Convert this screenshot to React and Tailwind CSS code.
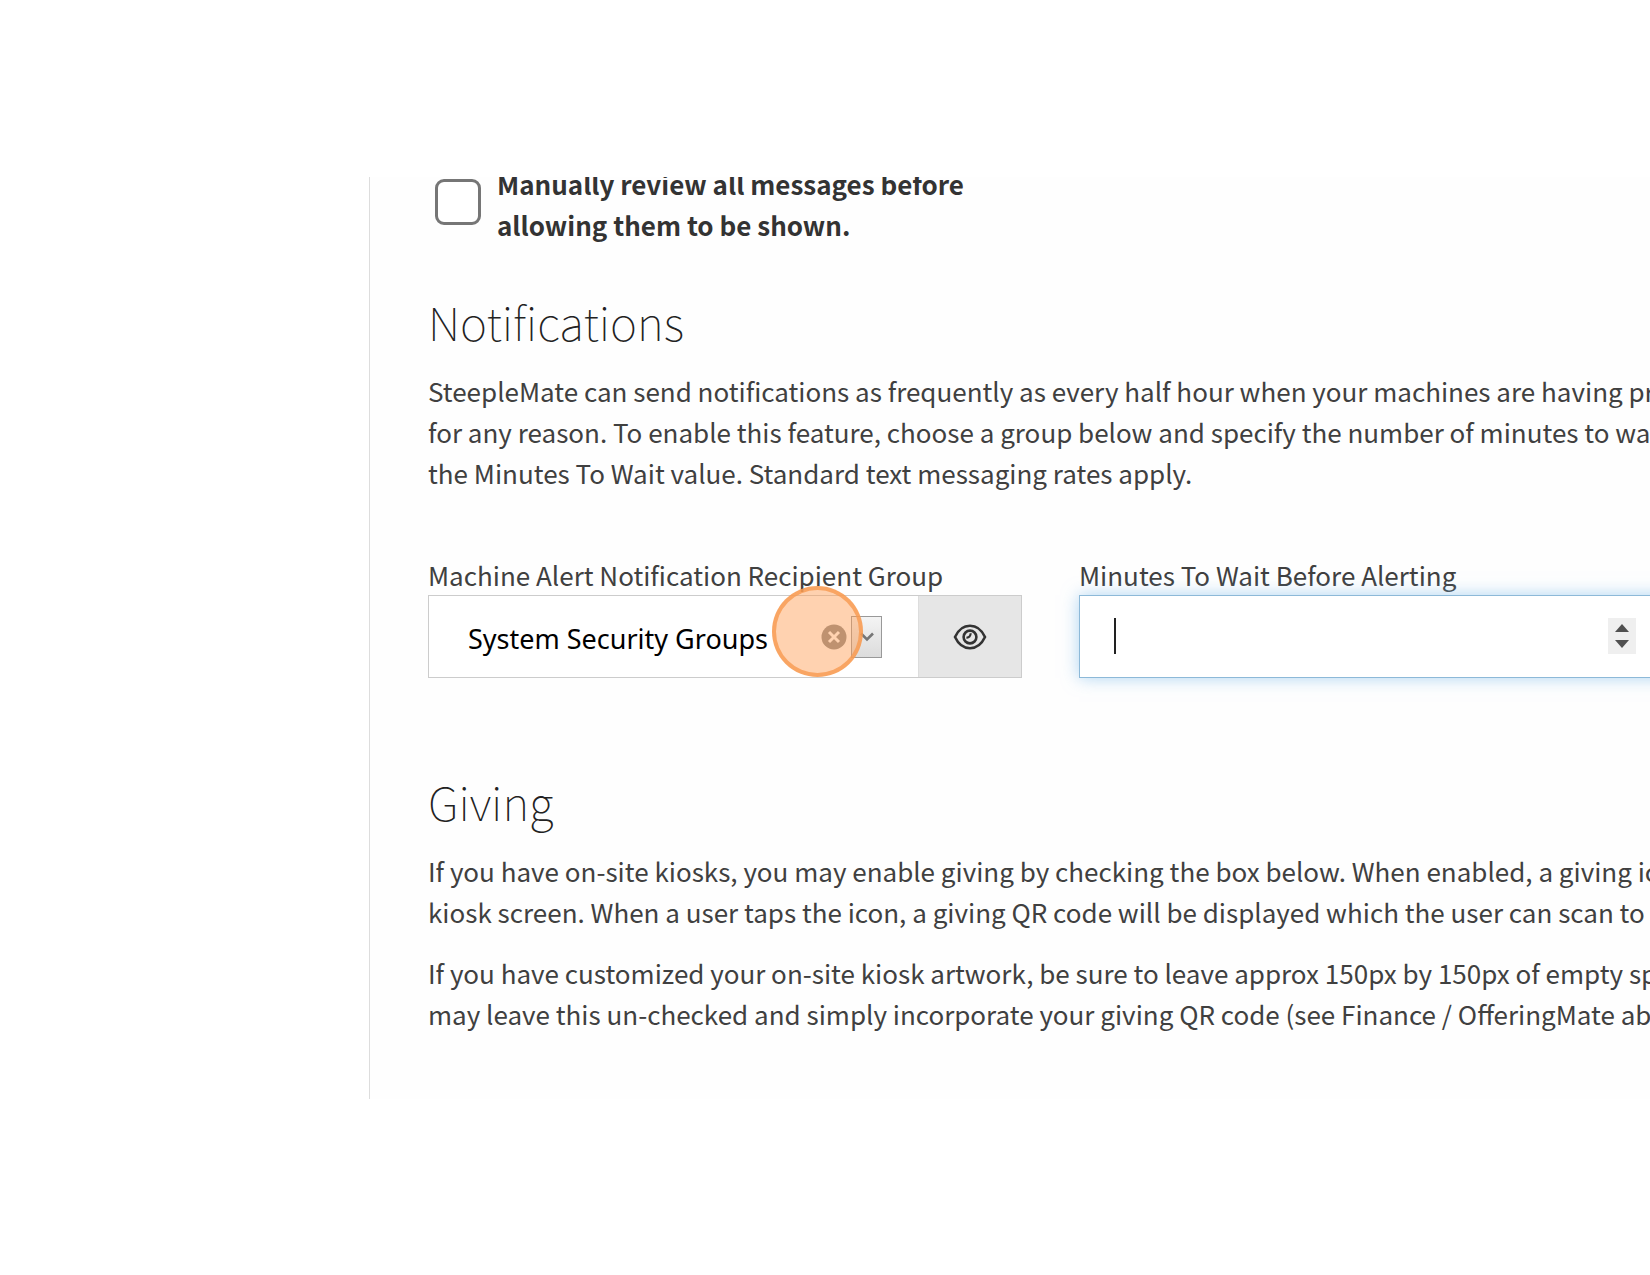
import { useState } from "react";

const NOTIFICATION_LINES = [
  "SteepleMate can send notifications as frequently as every half hour when your machines are having pro",
  "for any reason. To enable this feature, choose a group below and specify the number of minutes to wait",
  "the Minutes To Wait value. Standard text messaging rates apply.",
];

const GIVING_LINES = [
  "If you have on-site kiosks, you may enable giving by checking the box below. When enabled, a giving ico",
  "kiosk screen. When a user taps the icon, a giving QR code will be displayed which the user can scan to in",
];

const ARTWORK_LINES = [
  "If you have customized your on-site kiosk artwork, be sure to leave approx 150px by 150px of empty spa",
  "may leave this un-checked and simply incorporate your giving QR code (see Finance / OfferingMate abo",
];

const Heading = ({ children }) => (
  <h2 className="mb-[18px] text-[46px] leading-[61px] font-thin text-[#222]">{children}</h2>
);

const Paragraph = ({ lines }) => (
  <p className="mb-5 whitespace-nowrap">
    {lines.map((line) => (
      <span key={line} className="block">
        {line}
      </span>
    ))}
  </p>
);

const EyeIcon = () => (
  <svg width="34" height="28" viewBox="0 0 34 28" fill="none" stroke="#333" strokeWidth="2.6" aria-hidden="true">
    <path d="M2 14C5.500 6.500 11 2.800 17 2.800S28.500 6.500 32 14C28.500 21.500 23 25.200 17 25.200S5.500 21.500 2 14Z" />
    <circle cx="17" cy="14" r="6.400" />
    <path d="M17.500 10.300A3.600 3.600 0 0 1 13.400 14.500" strokeWidth="2.200" />
  </svg>
);

const GroupPicker = () => {
  const [group, setGroup] = useState("system");

  return (
    <div className="w-[594px] shrink-0">
      <label htmlFor="group" className="block">
        Machine Alert Notification Recipient Group
      </label>
      <div className="relative flex h-[83px] border border-[#ccc] bg-white">
        <div className="flex flex-1 items-center pr-9 pl-[39px]">
          <select
            id="group"
            value={group}
            onChange={(e) => setGroup(e.target.value)}
            className="h-full min-w-0 flex-1 appearance-none bg-transparent pt-1 font-['Noto_Sans','Open_Sans',sans-serif] text-[27px] text-black focus:outline-none"
          >
            <option value="system">System Security Groups</option>
            <option value=""></option>
          </select>
          <button type="button" aria-label="Clear" onClick={() => setGroup("")} className="mr-1">
            <svg width="26" height="26" viewBox="0 0 26 26" aria-hidden="true">
              <circle cx="13" cy="13" r="12.500" fill="#8a8a8a" />
              <path d="M8 8l10 10M18 8L8 18" stroke="#fff" strokeWidth="3" />
            </svg>
          </button>
          <span className="pointer-events-none flex h-[42px] w-[31px] items-center justify-center border border-[#999] bg-linear-to-b from-[#f4f4f4] to-[#dcdcdc]">
            <svg width="14" height="10" viewBox="0 0 14 10" fill="none" stroke="#777" strokeWidth="2.600" aria-hidden="true">
              <path d="M1 1.500l6 6 6-6" />
            </svg>
          </span>
        </div>
        <button
          type="button"
          aria-label="View group"
          className="flex w-[103px] items-center justify-center border-l border-[#ddd] bg-[#e6e6e6]"
        >
          <EyeIcon />
        </button>
        {/* click marker */}
        <span className="pointer-events-none absolute -top-[10px] left-[343px] size-[91px] rounded-full border-4 border-[#f79a50]/80 bg-[#ff9c50]/45" />
      </div>
    </div>
  );
};

const MinutesField = () => (
  <div className="w-[594px] shrink-0">
    <label htmlFor="minutes" className="block">
      Minutes To Wait Before Alerting
    </label>
    <div className="relative">
      <input
        id="minutes"
        type="number"
        className="block h-[83px] w-full appearance-none border border-[#8db9d8] bg-white px-[35px] caret-transparent shadow-[0_0_16px_rgba(120,185,235,0.6)] focus:outline-none [&::-webkit-inner-spin-button]:appearance-none"
      />
      <span className="pointer-events-none absolute top-[23px] left-[35px] h-9 w-0.5 bg-[#222]" />
      <span className="pointer-events-none absolute top-[23px] left-[529px] flex h-9 w-7 items-center justify-center bg-[#efefef]">
        <svg width="14" height="24" viewBox="0 0 14 24" fill="#505050" aria-hidden="true">
          <path d="M0 8L7 0l7 8zM0 16l7 8 7-8z" />
        </svg>
      </span>
    </div>
  </div>
);

const App = () => {
  const [review, setReview] = useState(false);

  return (
    <div className="min-h-screen overflow-hidden bg-white py-[177px] pl-[369px]">
      <main className="overflow-hidden border-l border-[#ddd] bg-[#fefefe] pb-[45px] pl-[58px] font-['Noto_Sans_CJK_SC',sans-serif] text-[26px] leading-[41px] text-[#404040]">
        <div className="-mt-[14px] mb-[46px] flex gap-4 pl-[7px]">
          <input
            id="review"
            type="checkbox"
            checked={review}
            onChange={(e) => setReview(e.target.checked)}
            className="mt-4 size-[46px] shrink-0 appearance-none rounded-[9px] border-[3px] border-[#767676] bg-white checked:bg-[#767676]"
          />
          <label htmlFor="review" className="w-[480px] font-bold text-[#333]">
            Manually review all messages before allowing them to be shown.
          </label>
        </div>

        <Heading>Notifications</Heading>
        <Paragraph lines={NOTIFICATION_LINES} />

        <div className="mt-[61px] mb-[93px] flex gap-[57px]">
          <GroupPicker />
          <MinutesField />
        </div>

        <Heading>Giving</Heading>
        <Paragraph lines={GIVING_LINES} />
        <Paragraph lines={ARTWORK_LINES} />
      </main>
    </div>
  );
};

export default App;
